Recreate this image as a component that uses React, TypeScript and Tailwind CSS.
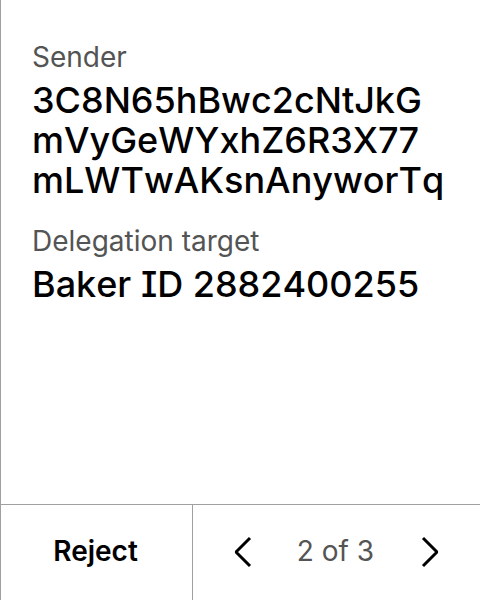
export default function App() {
  return (
    <div className="flex min-h-screen flex-col border-l border-[#a0a0a0] bg-white font-['Inter',sans-serif] text-black [font-feature-settings:'cv08']">
      <main className="flex-1 px-[31px] pt-[39px]">
        <dl>
          <dt className="text-[28px] leading-9 text-[#545454]">Sender</dt>
          <dd className="mt-[5px] text-[36px] leading-10 font-medium [font-kerning:none]">
            3C8N65hBwc2cNtJkG
            <br />
            mVyGeWYxhZ6R3X77
            <br />
            mLWTwAKsnAnyworTq
          </dd>
          <dt className="mt-[23px] text-[28px] leading-9 text-[#545454]">Delegation target</dt>
          <dd className="mt-[5px] text-[36px] leading-10 font-medium [font-kerning:none]">Baker ID 2882400255</dd>
        </dl>
      </main>
      <footer className="flex h-24 border-t border-[#a0a0a0]">
        <button type="button" className="w-48 border-r border-[#a0a0a0] pr-0.5 pb-1 text-[28px] font-semibold">
          Reject
        </button>
        <nav aria-label="Pages" className="flex flex-1 items-center justify-between px-8 pb-0.5">
          <button type="button" aria-label="Previous page">
            <svg className="h-10 w-10" viewBox="0 0 40 40" fill="none" stroke="currentColor" strokeWidth="3" strokeLinejoin="bevel">
              <path d="M25 6L11 20L25 34" />
            </svg>
          </button>
          <span className="pr-0.5 pb-0.5 text-[28px] text-[#545454]">2 of 3</span>
          <button type="button" aria-label="Next page">
            <svg className="h-10 w-10" viewBox="0 0 40 40" fill="none" stroke="currentColor" strokeWidth="3" strokeLinejoin="bevel">
              <path d="M15 6L29 20L15 34" />
            </svg>
          </button>
        </nav>
      </footer>
    </div>
  );
}
